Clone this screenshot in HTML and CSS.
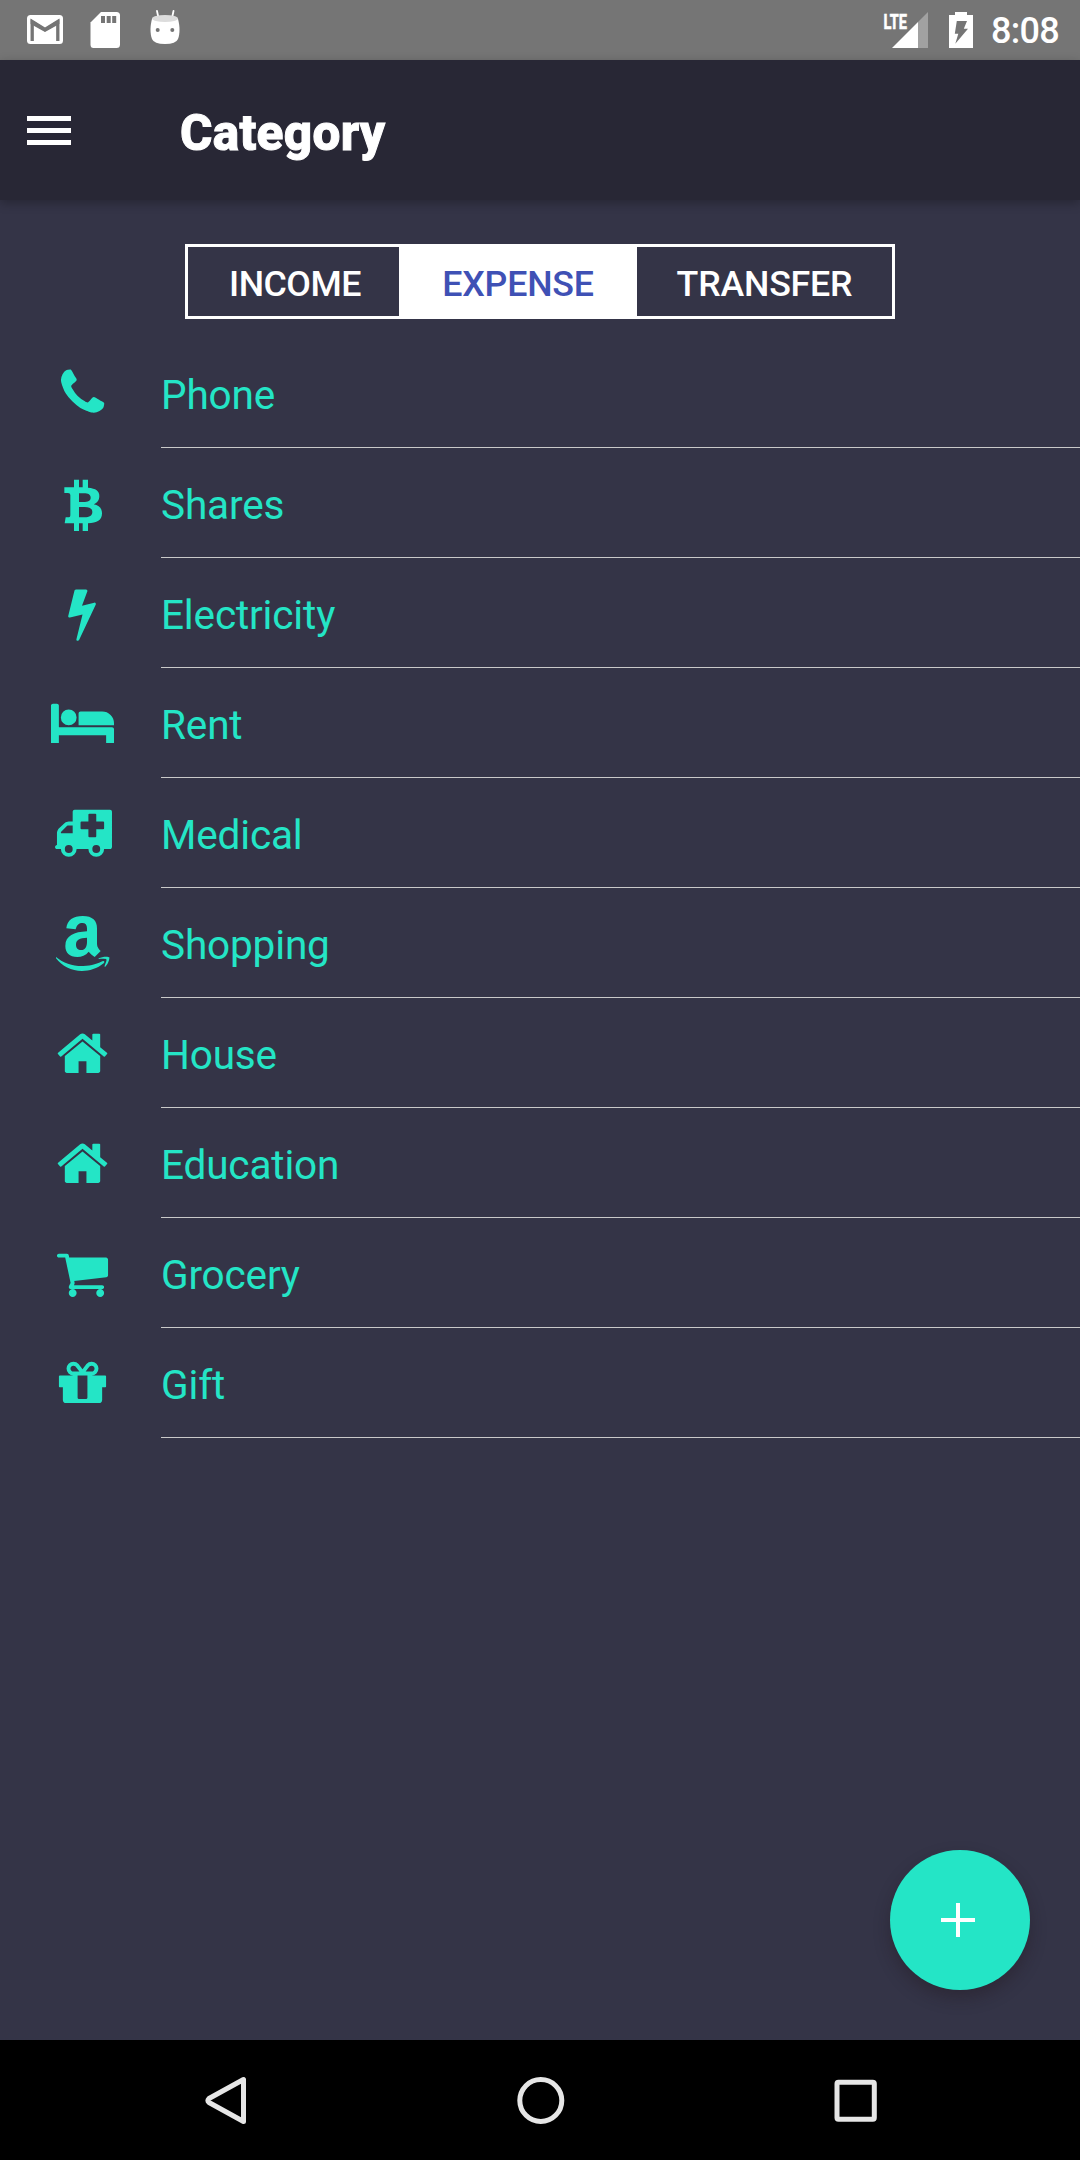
FILE: index.html
```html
<!DOCTYPE html>
<html lang="en">
<head>
<meta charset="utf-8">
<title>Category</title>
<link rel="stylesheet" href="styles.css">
</head>
<body>
<div class="screen">
  <div class="status-bar">
    <div class="status-left">
      <svg class="status-icon" viewBox="15 0 60 60"><rect x="27" y="15" width="36" height="29" rx="3.5" fill="#fff"/><path d="M32.2 41V21.500L45 29.500L57.800 21.500V41" fill="none" stroke="#757575" stroke-width="3.300"/><path d="M30.600 19.200L45 28.200L59.400 19.200V24L45 32L30.600 24Z" fill="#757575"/></svg>
      <svg class="status-icon" viewBox="75 0 60 60"><path d="M101 12h15.500q3.500 0 3.500 3.500v29q0 3.500-3.500 3.500h-23q-3 0-3-3.500v-22z" fill="#fff"/><path d="M101 16h4v7h-4zm5.700 0h4v7h-4zm5.500 0h4v7h-4z" fill="#757575"/></svg>
      <svg class="status-icon" viewBox="135 0 60 60"><path d="M157 11l1.500 7M173.500 11l-1.500 7" stroke="#fff" stroke-width="1.800" stroke-linecap="round"/><path d="M152 19C150 26 150 34 152 39Q154 44 165 44T178 39C180 34 180 26 178 19Z" fill="#fff"/><ellipse cx="165" cy="18.500" rx="13" ry="3.500" fill="#dcdcdc"/><circle cx="157.700" cy="30" r="2" fill="#757575"/><circle cx="172.300" cy="30" r="2" fill="#757575"/></svg>
    </div>
    <div class="status-right">
      <svg class="signal" viewBox="880 0 52 60"><path d="M892 48L918 22V48Z" fill="#fff"/><path d="M918 22L928 12V48H918Z" fill="#a1a1a1"/><text class="lte" x="883.500" y="28.500" textLength="23.500" lengthAdjust="spacingAndGlyphs">LTE</text></svg>
      <svg class="battery" viewBox="949 0 24 60"><path d="M955 12h12v3h6v33h-24V15h6z" fill="#fff"/><path d="M956.800 21H967L963.800 28.800H968L955.300 43.800L958.300 33.800H954.800Z" fill="#757575"/></svg>
      <span class="clock">8:08</span>
    </div>
  </div>

  <header class="app-bar">
    <svg class="menu" viewBox="0 0 44 30"><path d="M0 0h44v5H0zM0 12h44v5H0zM0 24h44v5H0z" fill="#fff"/></svg>
    <h1 class="title">Category</h1>
  </header>

  <main class="content">
    <div class="segment">
      <div class="tab income">INCOME</div>
      <div class="tab expense">EXPENSE</div>
      <div class="tab transfer">TRANSFER</div>
    </div>

    <ul class="list">
      <li class="row">
        <svg class="icon" viewBox="0 -6 483 330"><path transform="translate(165.300 76.500) scale(.0921)" d="M1600 1240q0 27-10 70.500t-21 68.500q-21 50-122 106-94 51-186 51-27 0-53-3.500t-57.500-12.500-47-14.500-55.500-20.500-49-18q-98-35-175-83-127-79-264-216t-216-264q-48-77-83-175-3-9-18-49t-20.500-55.500-14.500-47-12.500-57.500-3.500-53q0-92 51-186 56-101 106-122 25-11 68.500-21t70.500-10q14 0 21 3 18 6 53 76 11 19 30 54t35 63.500 31 53.500q3 4 17.500 25t21.500 35.500 7 28.500q0 20-28.500 50t-62 55-62 53-28.500 46q0 9 5 22.500t8.500 20.500 14 24 11.500 19q76 137 174 235t235 174q2 1 19 11.500t24 14 20.500 8.500 22.500 5q18 0 46-28.500t53-62 55-62 50-28.500q14 0 28.500 7t35.500 21.500 25 17.500q25 15 53.500 31t63.500 35 54 30q70 35 76 53 3 7 3 21z"/></svg>
        <span class="label">Phone</span>
      </li>
      <li class="row">
        <svg class="icon" viewBox="0 324 483 330"><path fill-rule="evenodd" d="M222 419h15v23h11v-23h16v24C288 445 298 453 298 468C298 481 291 489 281 493C297 496 306 505 306 520C306 541 291 549 264 550V573H248V550H237V573H222V550H194L197 532H207Q211 532 211 526V465Q211 459 204 459H193V442H222ZM237 460h14c14 0 21 4 21 13s-8 13-22 13h-13zM237 501h17c15 0 23 5 23 15s-8 16-24 16h-16z"/></svg>
        <span class="label">Shares</span>
      </li>
      <li class="row">
        <svg class="icon" viewBox="0 654 483 330"><path transform="translate(163 737.500) scale(.0928 .0921)" d="M1333 566q18 20 7 44l-540 1157q-13 25-42 25-4 0-14-2-17-4-25.500-19t-4.500-31l197-808-406 101q-4 1-12 1-18 0-31-11-18-15-13-39l201-825q4-16 17-26t30-10h328q19 0 32 12.500t13 29.500q0 8-5 18l-171 463 396-98q8-2 12-2 19 0 34 15z"/></svg>
        <span class="label">Electricity</span>
      </li>
      <li class="row">
        <svg class="icon" viewBox="0 -6 483 330"><path transform="translate(153 77.300) scale(.0923)" d="M256 1024h1728q26 0 45 19t19 45v448h-256v-256H256v256H0V320q0-26 19-45t45-19h128q26 0 45 19t19 45v704zM832 704q0-106-75-181t-181-75-181 75-75 181 75 181 181 75 181-75 75-181zM2048 960v-64q0-159-112.500-271.500T1664 512H960q-26 0-45 19t-19 45v384h1152z"/></svg>
        <span class="label">Rent</span>
      </li>
      <li class="row">
        <svg class="icon" viewBox="0 324 483 330"><path fill-rule="evenodd" transform="translate(165 407.300) scale(.0921)" d="M1856 192v1152q0 26-19 45t-45 19h-192a256 256 0 0 1-512 0H704a256 256 0 0 1-512 0H64q-26 0-45-19T0 1344t19-45 45-19V878q0-26 20-72t40-66l184-170q20-19 66-38t72-20H576V192q0-26 19-45t45-19h1152q26 0 45 19t19 45zM192 896h384V640H418q-14 2-22 9L201 844q-7 12-9 22zM1088 288q0-32 32-32h192q32 0 32 32v224h224q32 0 32 32v192q0 32-32 32h-224v224q0 32-32 32h-192q-32 0-32-32V768H864q-32 0-32-32V544q0-32 32-32h224zM576 1408a128 128 0 1 0-256 0 128 128 0 0 0 256 0zM1472 1408a128 128 0 1 0-256 0 128 128 0 0 0 256 0z"/></svg>
        <span class="label">Medical</span>
      </li>
      <li class="row">
        <svg class="icon" viewBox="0 654 483 330"><path fill-rule="evenodd" d="M199 775C201 750 220 738 248 738C278 738 291 752 291 775V822C291 832 297 838 302 843L284 861C277 856 270 850 266 845C257 856 245 861 232 861C208 861 196 848 196 828C196 797 222 786 261 784V775C261 764 256 759 247 759C237 759 231 764 227 778ZM261 803C239 804 228 809 228 824C228 834 234 840 243 840C256 840 261 829 261 815Z"/><path d="M168 861C190 880 220 889 250 888C275 887 295 880 309 873C313 872 315 876 311 880C292 896 268 903 246 903C214 903 186 889 168 865ZM296 865C306 859 326 859 328 862C329 868 324 883 316 890C314 891 313 889 314 887C317 879 321 871 319 868C317 866 307 866 296 867Z"/></svg>
        <span class="label">Shopping</span>
      </li>
      <li class="row">
        <svg class="icon" viewBox="0 -6 483 330"><path id="home" transform="translate(165 77.300) scale(.0921)" d="M1472 992v480q0 26-19 45t-45 19h-384v-384H768v384H384q-26 0-45-19t-19-45V992q0-1 .5-3t.5-3l575-474 575 474q1 2 1 6zm223-69l-62 74q-8 9-21 11h-3q-13 0-21-7L896 424l-692 577q-12 8-24 7-13-2-21-11l-62-74q-8-10-7-23.500t11-21.500l719-599q32-26 76-26t76 26l244 204V288q0-14 9-23t23-9h192q14 0 23 9t9 23v408l219 182q10 8 11 21.500t-7 23.500z"/></svg>
        <span class="label">House</span>
      </li>
      <li class="row">
        <svg class="icon" viewBox="0 -6 483 330"><use href="#home"/></svg>
        <span class="label">Education</span>
      </li>
      <li class="row">
        <svg class="icon" viewBox="0 654 483 330"><path transform="translate(165 737.500) scale(.0921)" d="M704 1536q0 52-38 90t-90 38-90-38-38-90 38-90 90-38 90 38 38 90zm896 0q0 52-38 90t-90 38-90-38-38-90 38-90 90-38 90 38 38 90zm128-1088v512q0 24-16.500 42.500t-40.500 21.500l-1044 122q13 60 13 70 0 16-24 64h920q26 0 45 19t19 45-19 45-45 19h-1024q-26 0-45-19t-19-45q0-11 8-31.500t16-36 21.500-40 15.500-29.500l-177-823h-204q-26 0-45-19t-19-45 19-45 45-19h256q16 0 28.500 6.500t19.500 15.500 13 24.500 8 26 5.500 29.500 4.500 26h1201q26 0 45 19t19 45z"/></svg>
        <span class="label">Grocery</span>
      </li>
      <li class="row">
        <svg class="icon" viewBox="0 984 483 330"><path transform="translate(165 1067.500) scale(.0921)" d="M1056 1356v-716h-320v716q0 25 18 38.500t46 13.500h192q28 0 46-13.500t18-38.500zm-456-844h195l-126-161q-26-31-69-31-40 0-68 28t-28 68 28 68 68 28zm688-96q0-40-28-68t-68-28q-43 0-69 31l-125 161h194q40 0 68-28t28-68zm376 256v320q0 14-9 23t-23 9h-96v416q0 40-28 68t-68 28h-1088q-40 0-68-28t-28-68v-416h-96q-14 0-23-9t-9-23v-320q0-14 9-23t23-9h440q-93 0-158.500-65.500t-65.500-158.500 65.500-158.500 158.500-65.500q107 0 168 77l128 165 128-165q61-77 168-77 93 0 158.500 65.500t65.500 158.500-65.500 158.500-158.500 65.500h440q14 0 23 9t9 23z"/></svg>
        <span class="label">Gift</span>
      </li>
    </ul>

    <div class="fab"><svg class="plus" viewBox="0 0 34 34"><path d="M15 0h4v15h15v4H19v15h-4V19H0v-4h15z" fill="#fff"/></svg></div>
  </main>

  <nav class="nav-bar">
    <svg class="nav-icon" viewBox="195 2070 60 60"><path d="M243.500 2079.500V2121.500L209 2102.500Q207 2100.500 209 2098.500Z"/></svg>
    <svg class="nav-icon" viewBox="510 2070 60 60"><circle cx="539.800" cy="2100.500" r="21"/></svg>
    <svg class="nav-icon" viewBox="826 2070 60 60"><rect x="837" y="2082.200" width="37.300" height="37" rx="1.500"/></svg>
  </nav>
</div>
</body>
</html>
```
FILE: styles.css
```css
* { box-sizing: border-box; }
body { margin: 0; font-family: Roboto, "Liberation Sans", sans-serif; }
svg { display: block; flex: none; }

.screen {
  width: 1080px;
  height: 2160px;
  display: flex;
  flex-direction: column;
  background: #343447;
  overflow: hidden;
}

.status-bar {
  height: 60px;
  flex: none;
  padding: 0 22px 0 15px;
  display: flex;
  justify-content: space-between;
  background: #757575;
}
.status-left, .status-right { display: flex; }
.status-icon { width: 60px; height: 60px; }
.signal { width: 52px; height: 60px; margin-right: 17px; }
.lte { font-size: 21px; font-weight: 700; fill: #fff; stroke: #fff; stroke-width: .6px; }
.battery { width: 24px; height: 60px; margin-right: 18px; }
.clock {
  width: 67px;
  font-size: 36px;
  font-weight: 500;
  line-height: 62px;
  letter-spacing: -.7px;
  color: #fff;
  white-space: nowrap;
}

.app-bar {
  height: 140px;
  flex: none;
  padding-left: 27px;
  display: flex;
  align-items: center;
  background: #282735;
  box-shadow: 0 3px 10px rgba(0, 0, 0, .28);
  z-index: 1;
}
.menu { width: 44px; height: 30px; margin: 2px 109px 0 0; }
.title {
  margin: 6px 0 0;
  font-size: 49.500px;
  font-weight: 800;
  line-height: 60px;
  letter-spacing: .3px;
  color: #fff;
  -webkit-text-stroke: 1px #fff;
}

.content {
  position: relative;
  flex: 1;
  padding-top: 44px;
  display: flex;
  flex-direction: column;
  align-items: center;
}
.segment {
  width: 710px;
  height: 75px;
  margin-bottom: 19px;
  display: flex;
  border: 3px solid #fff;
}
.tab {
  display: flex;
  align-items: center;
  justify-content: center;
  padding-top: 5px;
  font-size: 35.750px;
  font-weight: 500;
  letter-spacing: -.2px;
  color: #fff;
}
.income { width: 211px; padding-left: 3px; letter-spacing: -.5px; }
.expense { width: 238px; background: #fff; color: #3f51b5; }
.transfer { flex: 1; }

.list { width: 100%; margin: 0; padding: 0; list-style: none; }
.row { height: 110px; display: flex; }
.icon { width: 161px; height: 110px; fill: #24e5c6; }
.label {
  flex: 1;
  border-bottom: 1px solid #c9c9c9;
  font-size: 40.500px;
  line-height: 114px;
  letter-spacing: -.15px;
  color: #24e5c6;
}

.fab {
  position: absolute;
  right: 50px;
  bottom: 50px;
  width: 140px;
  height: 140px;
  padding: 53px 0 0 51px;
  border-radius: 50%;
  background: #24e5c6;
  box-shadow: 0 8px 16px rgba(32, 20, 25, .35);
}
.plus { width: 34px; height: 34px; }

.nav-bar {
  height: 120px;
  flex: none;
  padding: 0 194px 0 195px;
  display: flex;
  align-items: center;
  justify-content: space-between;
  background: #000;
}
.nav-icon { width: 60px; height: 60px; fill: none; stroke: #e6e6e6; stroke-width: 5; stroke-linejoin: round; }
```
